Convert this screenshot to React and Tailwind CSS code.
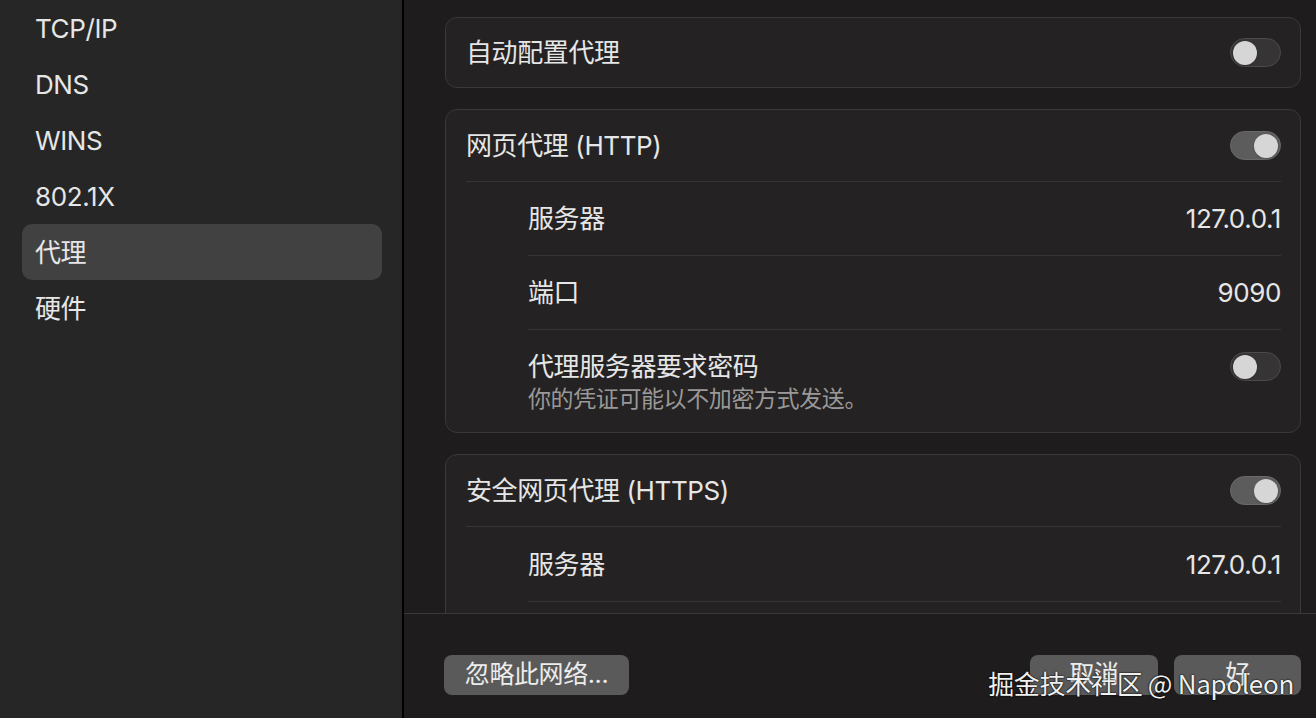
import React from "react";

const font = { fontFamily: "Inter, 'Noto Sans CJK SC', sans-serif" };

const sideItems = ["TCP/IP", "DNS", "WINS", "802.1X", "代理", "硬件"];

const Toggle = ({ on, className = "" }) => (
  <div
    className={`flex h-[29px] w-[51px] shrink-0 items-center rounded-full border p-[2px] ${className} ${
      on ? "justify-end border-[#6a6a6a] bg-[#5c5c5c]" : "justify-start border-[#4c4a4a] bg-[#363434]"
    }`}
  >
    <div className="h-[24px] w-[24px] rounded-full bg-[#d6d6d6] shadow-sm" />
  </div>
);

const Card = ({ children }) => (
  <div className="rounded-[12px] border border-[#3a3838] bg-[#242222] pl-[20px] pr-[19px]">{children}</div>
);

const SubRow = ({ label, value, first, h = "h-[73px]" }) => (
  <div className={`ml-[62px] flex ${h} items-center justify-between ${first ? "" : "border-t border-[#363434]"}`}>
    <span>{label}</span>
    <span>{value}</span>
  </div>
);

export default function App() {
  return (
    <div style={font} className="relative flex h-[718px] w-[1316px] overflow-hidden bg-[#1e1c1c] text-[26px] tracking-[-0.4px] text-[#e6e6e6]">
      {/* sidebar */}
      <div className="w-[404px] shrink-0 border-r-2 border-black bg-[#262626] pl-[22px] pr-[20px]">
        {sideItems.map(item => (
          <div
            key={item}
            className={`flex h-[56px] items-center rounded-[10px] px-[13px] ${item === "代理" ? "bg-[#414141]" : ""}`}
          >
            {item}
          </div>
        ))}
      </div>

      {/* main */}
      <div className="flex flex-1 flex-col">
        <div className="flex h-[614px] flex-col gap-[21px] overflow-hidden border-b border-[#3a3838] pl-[41px] pr-[15px] pt-[17px]">
          <Card>
            <div className="flex h-[69px] items-center justify-between">
              <span>自动配置代理</span>
              <Toggle />
            </div>
          </Card>

          <Card>
            <div className="flex h-[72px] items-center justify-between border-b border-[#363434]">
              <span>网页代理 (HTTP)</span>
              <Toggle on />
            </div>
            <SubRow first label="服务器" value="127.0.0.1" />
            <SubRow label="端口" value="9090" h="h-[74px]" />
            <div className="ml-[62px] flex h-[103px] items-start justify-between border-t border-[#363434] pt-[21px]">
              <div className="flex flex-col">
                <span className="leading-[32px]">代理服务器要求密码</span>
                <span className="text-[23px] leading-[33px] text-[#9a9898]">你的凭证可能以不加密方式发送。</span>
              </div>
              <Toggle className="mt-[1px]" />
            </div>
          </Card>

          <Card>
            <div className="flex h-[72px] items-center justify-between border-b border-[#363434]">
              <span>安全网页代理 (HTTPS)</span>
              <Toggle on />
            </div>
            <SubRow first label="服务器" value="127.0.0.1" h="h-[74px]" />
            <SubRow label="端口" value="9090" h="h-[74px]" />
          </Card>
        </div>

        {/* footer */}
        <div className="flex flex-1 items-start justify-between pl-[40px] pr-[15px] pt-[41px]">
          <button className="flex h-[40px] w-[185px] items-center justify-center rounded-[8px] bg-[#5a5a5a] text-[25px] text-[#ececec]">
            忽略此网络...
          </button>
          <div className="flex gap-[16px]">
            <button className="flex h-[40px] w-[128px] items-center justify-center rounded-[8px] bg-[#5a5a5a] text-[25px] text-[#ececec]">
              取消
            </button>
            <button className="flex h-[40px] w-[127px] items-center justify-center rounded-[8px] bg-[#5a5a5a] text-[25px] text-[#ececec]">
              好
            </button>
          </div>
        </div>
      </div>

      {/* watermark */}
      <div
        style={{ fontFamily: "'Noto Sans CJK SC', sans-serif" }}
        className="absolute bottom-[18px] right-[22px] text-[26px] leading-[34px] tracking-[-0.3px] text-[#f0f0f0] [text-shadow:0_0_2px_#000,0_0_1px_#000]"
      >
        掘金技术社区 @ Napoleon
      </div>
    </div>
  );
}
